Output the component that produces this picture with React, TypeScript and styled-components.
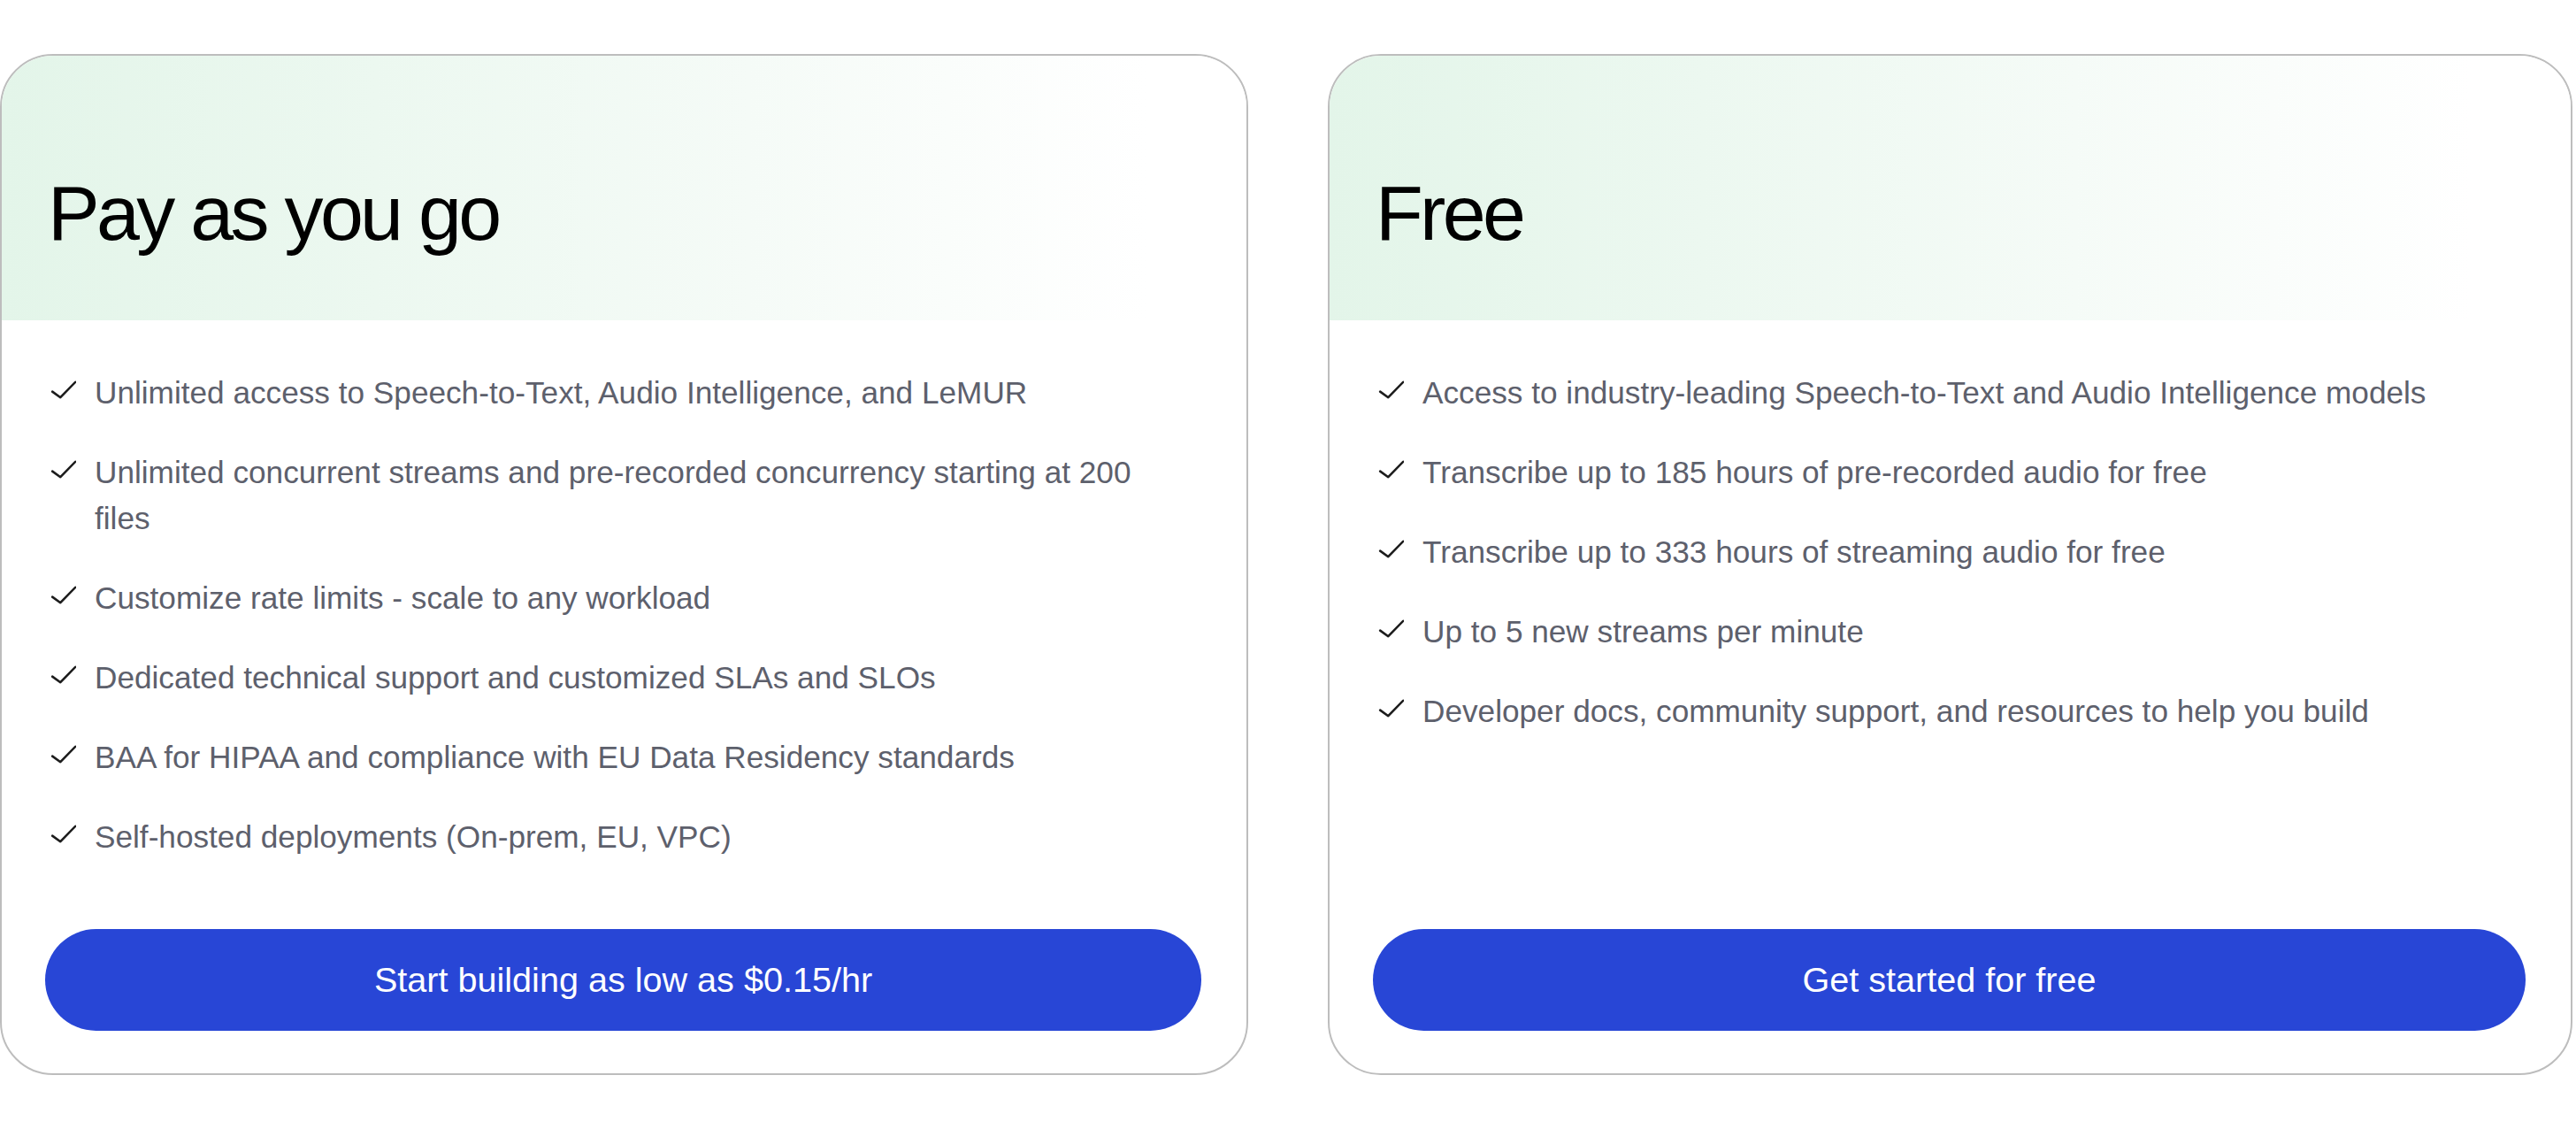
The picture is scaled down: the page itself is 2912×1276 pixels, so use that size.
import React from "react";
import styled, { createGlobalStyle } from "styled-components";

const GlobalStyle = createGlobalStyle`
  html, body {
    margin: 0;
    padding: 0;
    background: #ffffff;
  }
  body {
    font-family: "Liberation Sans", Arial, sans-serif;
    -webkit-font-smoothing: antialiased;
  }
`;

const Page = styled.div`
  display: grid;
  grid-template-columns: 1411px 1407px;
  column-gap: 90px;
  padding-top: 61px;
  box-sizing: border-box;
  width: 2912px;
`;

const Card = styled.section`
  display: flex;
  flex-direction: column;
  border: 2px solid #bdbdbd;
  border-radius: 60px;
  overflow: hidden;
  background: #ffffff;
  box-sizing: border-box;
`;

const Header = styled.header`
  height: 299px;
  box-sizing: border-box;
  padding: 134px 52px 0;
  background: linear-gradient(
    90deg,
    #e3f5e9 0%,
    #ecf8f0 30%,
    #f5fbf7 60%,
    #ffffff 92%
  );
`;

const Title = styled.h2`
  margin: 0;
  font-family: "Liberation Sans", Arial, sans-serif;
  font-weight: 400;
  font-size: 88px;
  line-height: 88px;
  letter-spacing: -3.7px;
  color: #000000;
`;

const List = styled.ul`
  list-style: none;
  margin: 0;
  padding: 56px 80px 0 54px;
  display: flex;
  flex-direction: column;
  gap: 38px;
`;

const Item = styled.li`
  display: flex;
  align-items: flex-start;
  gap: 21px;
  font-size: 35.2px;
  line-height: 52px;
  color: #5d606c;
  letter-spacing: 0px;
`;

const CheckIcon = styled.svg`
  flex: 0 0 30px;
  width: 30px;
  height: 52px;
`;

const Footer = styled.div`
  margin-top: auto;
  padding: 78px 51px 48px 49px;
`;

const Button = styled.button`
  display: flex;
  align-items: center;
  justify-content: center;
  width: 100%;
  height: 115px;
  border: none;
  border-radius: 58px;
  background: #2846d6;
  color: #ffffff;
  font-family: "Liberation Sans", Arial, sans-serif;
  font-size: 39.6px;
  letter-spacing: 0px;
  cursor: pointer;
`;

const Check = () => (
  <CheckIcon viewBox="0 0 30 52" fill="none">
    <path
      d="M3.2 24.6 L12.3 31.2 L29.2 13.8"
      stroke="#1c1c1c"
      strokeWidth="2.6"
      strokeLinecap="round"
      strokeLinejoin="round"
    />
  </CheckIcon>
);

type Plan = { title: string; features: string[]; cta: string };

const plans: Plan[] = [
  {
    title: "Pay as you go",
    features: [
      "Unlimited access to Speech-to-Text, Audio Intelligence, and LeMUR",
      "Unlimited concurrent streams and pre-recorded concurrency starting at 200 files",
      "Customize rate limits - scale to any workload",
      "Dedicated technical support and customized SLAs and SLOs",
      "BAA for HIPAA and compliance with EU Data Residency standards",
      "Self-hosted deployments (On-prem, EU, VPC)",
    ],
    cta: "Start building as low as $0.15/hr",
  },
  {
    title: "Free",
    features: [
      "Access to industry-leading Speech-to-Text and Audio Intelligence models",
      "Transcribe up to 185 hours of pre-recorded audio for free",
      "Transcribe up to 333 hours of streaming audio for free",
      "Up to 5 new streams per minute",
      "Developer docs, community support, and resources to help you build",
    ],
    cta: "Get started for free",
  },
];

export default function App() {
  return (
    <>
      <GlobalStyle />
      <Page>
        {plans.map((p) => (
          <Card key={p.title}>
            <Header>
              <Title>{p.title}</Title>
            </Header>
            <List>
              {p.features.map((f) => (
                <Item key={f}>
                  <Check />
                  <span>{f}</span>
                </Item>
              ))}
            </List>
            <Footer>
              <Button>{p.cta}</Button>
            </Footer>
          </Card>
        ))}
      </Page>
    </>
  );
}
